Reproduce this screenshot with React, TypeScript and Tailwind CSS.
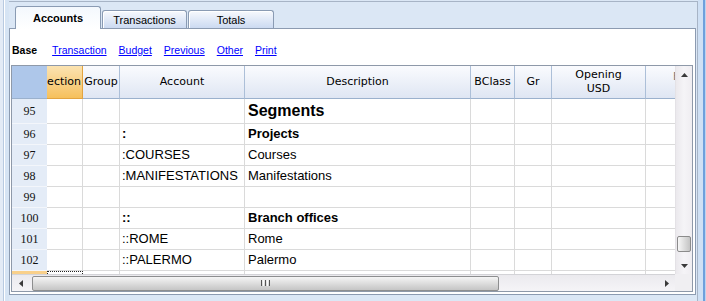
import React from "react";

type Row = {
  n: string;
  tall?: boolean;
  account: string;
  desc: string;
  bold?: boolean;
  big?: boolean;
};

const rows: Row[] = [
  { n: "95", tall: true, account: "", desc: "Segments", big: true },
  { n: "96", account: ":", desc: "Projects", bold: true },
  { n: "97", account: ":COURSES", desc: "Courses" },
  { n: "98", account: ":MANIFESTATIONS", desc: "Manifestations" },
  { n: "99", account: "", desc: "" },
  { n: "100", account: "::", desc: "Branch offices", bold: true },
  { n: "101", account: "::ROME", desc: "Rome" },
  { n: "102", account: "::PALERMO", desc: "Palermo" },
];

const links = ["Transaction", "Budget", "Previous", "Other", "Print"];

const hdr =
  "flex shrink-0 items-center justify-center border-r border-b border-r-[#acbfd8] border-b-[#9bb1cd] bg-linear-to-b from-[#fafbfe] to-[#dfe6f3]";
const cell = "flex shrink-0 items-center overflow-hidden whitespace-nowrap border-r border-b border-[#dadada]";

function UpArrow() {
  return (
    <svg width="7" height="4" viewBox="0 0 7 4">
      <polygon points="0,4 3.5,0 7,4" fill="#3a3a3a" />
    </svg>
  );
}

function DownArrow() {
  return (
    <svg width="7" height="4" viewBox="0 0 7 4">
      <polygon points="0,0 7,0 3.5,4" fill="#3a3a3a" />
    </svg>
  );
}

function LeftArrow() {
  return (
    <svg width="4" height="7" viewBox="0 0 4 7">
      <polygon points="4,0 0,3.5 4,7" fill="#3a3a3a" />
    </svg>
  );
}

function RightArrow() {
  return (
    <svg width="4" height="7" viewBox="0 0 4 7">
      <polygon points="0,0 4,3.5 0,7" fill="#3a3a3a" />
    </svg>
  );
}

function BodyRow({ row }: { row: Row }) {
  const h = row.tall ? "h-[25px]" : "h-[21px]";
  const weight = row.bold ? "font-bold" : "";
  return (
    <div className={`flex shrink-0 ${h} text-[13px]`}>
      <div className="flex w-[35px] shrink-0 items-center justify-center border-b border-[#f3f6fb] bg-[#e4ecf7] font-['Liberation_Serif',serif] text-[12px] text-[#111]">
        {row.n}
      </div>
      <div className={`${cell} w-[36px]`} />
      <div className={`${cell} w-[37px]`} />
      <div className={`${cell} w-[125px] pl-[2px] ${weight}`}>{row.account}</div>
      <div className={`${cell} w-[226px] pl-[3px] ${row.big ? "text-[16px] font-bold" : weight}`}>
        {row.desc}
      </div>
      <div className={`${cell} w-[44px]`} />
      <div className={`${cell} w-[37px]`} />
      <div className={`${cell} w-[94px]`} />
      <div className={`${cell} w-[94px]`} />
    </div>
  );
}

export default function App() {
  return (
    <div className="flex h-[301px] w-[706px] overflow-hidden bg-[#dbe7f5] font-['Liberation_Sans',Arial,sans-serif] text-black">
      {/* left window edge */}
      <div className="flex w-[9px] shrink-0">
        <div className="w-[3px] bg-[#e3ebf6]" />
        <div className="w-px bg-[#b8cae1]" />
        <div className="w-px bg-white" />
        <div className="w-[4px] bg-[#d6e4f4]" />
      </div>

      <div className="mt-px flex w-[689px] shrink-0 flex-col border-t border-r border-[#a7b4c6]">
        {/* tabs */}
        <div className="flex h-[26px] shrink-0 items-end gap-px pl-[6px]">
          <div className="relative z-10 -mb-px flex h-[23px] w-[86px] items-center justify-center rounded-t-[3px] border border-b-0 border-[#8a9bb3] bg-linear-to-b from-[#f4f8fd] to-white text-[11px] font-bold">
            Accounts
          </div>
          <div className="flex h-[18px] w-[85px] items-center justify-center rounded-t-[3px] border border-b-0 border-[#8a9bb3] bg-linear-to-b from-[#f7f9fd] to-[#ccdaf1] pt-px text-[11px] shadow-[inset_1px_1px_0_#fff]">
            Transactions
          </div>
          <div className="flex h-[18px] w-[86px] items-center justify-center rounded-t-[3px] border border-b-0 border-[#8a9bb3] bg-linear-to-b from-[#f7f9fd] to-[#ccdaf1] pt-px text-[11px] shadow-[inset_1px_1px_0_#fff]">
            Totals
          </div>
        </div>

        {/* panel */}
        <div className="flex h-[267px] w-[687px] shrink-0 flex-col border border-[#8c9bb1] bg-white">
          <div className="flex h-[36px] shrink-0 items-center gap-[12px] pl-[2px] pt-[8px] text-[10.5px]">
            <span className="mr-[3px] font-bold">Base</span>
            {links.map((l) => (
              <a key={l} href="#" className="text-[#0000ff] underline">
                {l}
              </a>
            ))}
          </div>

          {/* grid */}
          <div className="ml-px flex h-[227px] w-[682px] shrink-0 flex-col border border-[#8e99a9]">
            <div className="flex h-[208px] shrink-0">
              <div className="flex w-[663px] shrink-0 flex-col overflow-hidden">
                {/* header */}
                <div className="flex h-[33px] shrink-0 font-['DejaVu_Sans',sans-serif] text-[11px]">
                  <div className="w-[35px] shrink-0 border-b border-[#9bb1cd] bg-[#aec7ea]" />
                  <div className="flex w-[36px] shrink-0 items-center justify-end overflow-hidden whitespace-nowrap border-r border-b border-[#e3a440] bg-linear-to-b from-[#fbe3b1] to-[#f6c05b] pr-px">
                    Section
                  </div>
                  <div className={`${hdr} w-[37px]`}>Group</div>
                  <div className={`${hdr} w-[125px]`}>Account</div>
                  <div className={`${hdr} w-[226px]`}>Description</div>
                  <div className={`${hdr} w-[44px]`}>BClass</div>
                  <div className={`${hdr} w-[37px]`}>Gr</div>
                  <div className={`${hdr} w-[94px] flex-col leading-[14px]`}>
                    <span>Opening</span>
                    <span>USD</span>
                  </div>
                  <div className="flex w-[94px] shrink-0 items-start overflow-hidden whitespace-nowrap border-b border-[#9bb1cd] bg-linear-to-b from-[#fafbfe] to-[#dfe6f3] pl-[27px] pt-[3px] text-[#777]">
                    Balance
                  </div>
                </div>

                {rows.map((r) => (
                  <BodyRow key={r.n} row={r} />
                ))}

                {/* focused row, mostly out of view */}
                <div className="flex h-[21px] shrink-0">
                  <div className="w-[35px] shrink-0 bg-[#f9d08a]" />
                  <div className="w-[36px] shrink-0 border border-dotted border-[#222]" />
                  <div className={`${cell} w-[37px]`} />
                  <div className={`${cell} w-[125px]`} />
                  <div className={`${cell} w-[226px]`} />
                  <div className={`${cell} w-[44px]`} />
                  <div className={`${cell} w-[37px]`} />
                  <div className={`${cell} w-[94px]`} />
                </div>
              </div>

              {/* vertical scrollbar */}
              <div className="flex w-[17px] shrink-0 flex-col border-l border-[#e4e2e6] bg-linear-to-r from-[#ebe9ed] via-[#f5f4f7] to-[#efedf1]">
                <div className="flex h-[17px] shrink-0 items-center justify-center">
                  <UpArrow />
                </div>
                <div className="h-[153px] shrink-0" />
                <div className="mx-px h-[16px] shrink-0 rounded-[2px] border border-[#8b8b8b] bg-linear-to-r from-[#f7f7f7] to-[#c4c4c4]" />
                <div className="flex-1" />
                <div className="flex h-[17px] shrink-0 items-center justify-center">
                  <DownArrow />
                </div>
              </div>
            </div>

            {/* horizontal scrollbar */}
            <div className="flex h-[17px] shrink-0">
              <div className="flex w-[663px] shrink-0 items-center border-t border-[#d3d3d7] bg-linear-to-b from-[#ebeaee] to-[#f5f4f7]">
                <div className="flex h-full w-[17px] shrink-0 items-center justify-center">
                  <LeftArrow />
                </div>
                <div className="ml-[3px] flex h-[15px] w-[467px] shrink-0 items-center justify-center gap-px rounded-[2px] border border-[#8d8e8f] bg-linear-to-b from-[#f5f5f5] to-[#c5c5c5]">
                  <div className="h-[6px] w-px bg-[#555]" />
                  <div className="h-[6px] w-px bg-[#fafafa]" />
                  <div className="h-[6px] w-px bg-[#555]" />
                  <div className="h-[6px] w-px bg-[#fafafa]" />
                  <div className="h-[6px] w-px bg-[#555]" />
                </div>
                <div className="flex-1" />
                <div className="flex h-full w-[17px] shrink-0 items-center justify-center">
                  <RightArrow />
                </div>
              </div>
              <div className="w-[17px] shrink-0 bg-[#f0eff2]" />
            </div>
          </div>
        </div>
      </div>

      {/* right window edge */}
      <div className="flex w-[8px] shrink-0">
        <div className="w-[5px] bg-[#cfe0f4]" />
        <div className="w-[2px] bg-[#6fa0dc]" />
        <div className="w-px bg-[#bcd3ef]" />
      </div>
    </div>
  );
}
